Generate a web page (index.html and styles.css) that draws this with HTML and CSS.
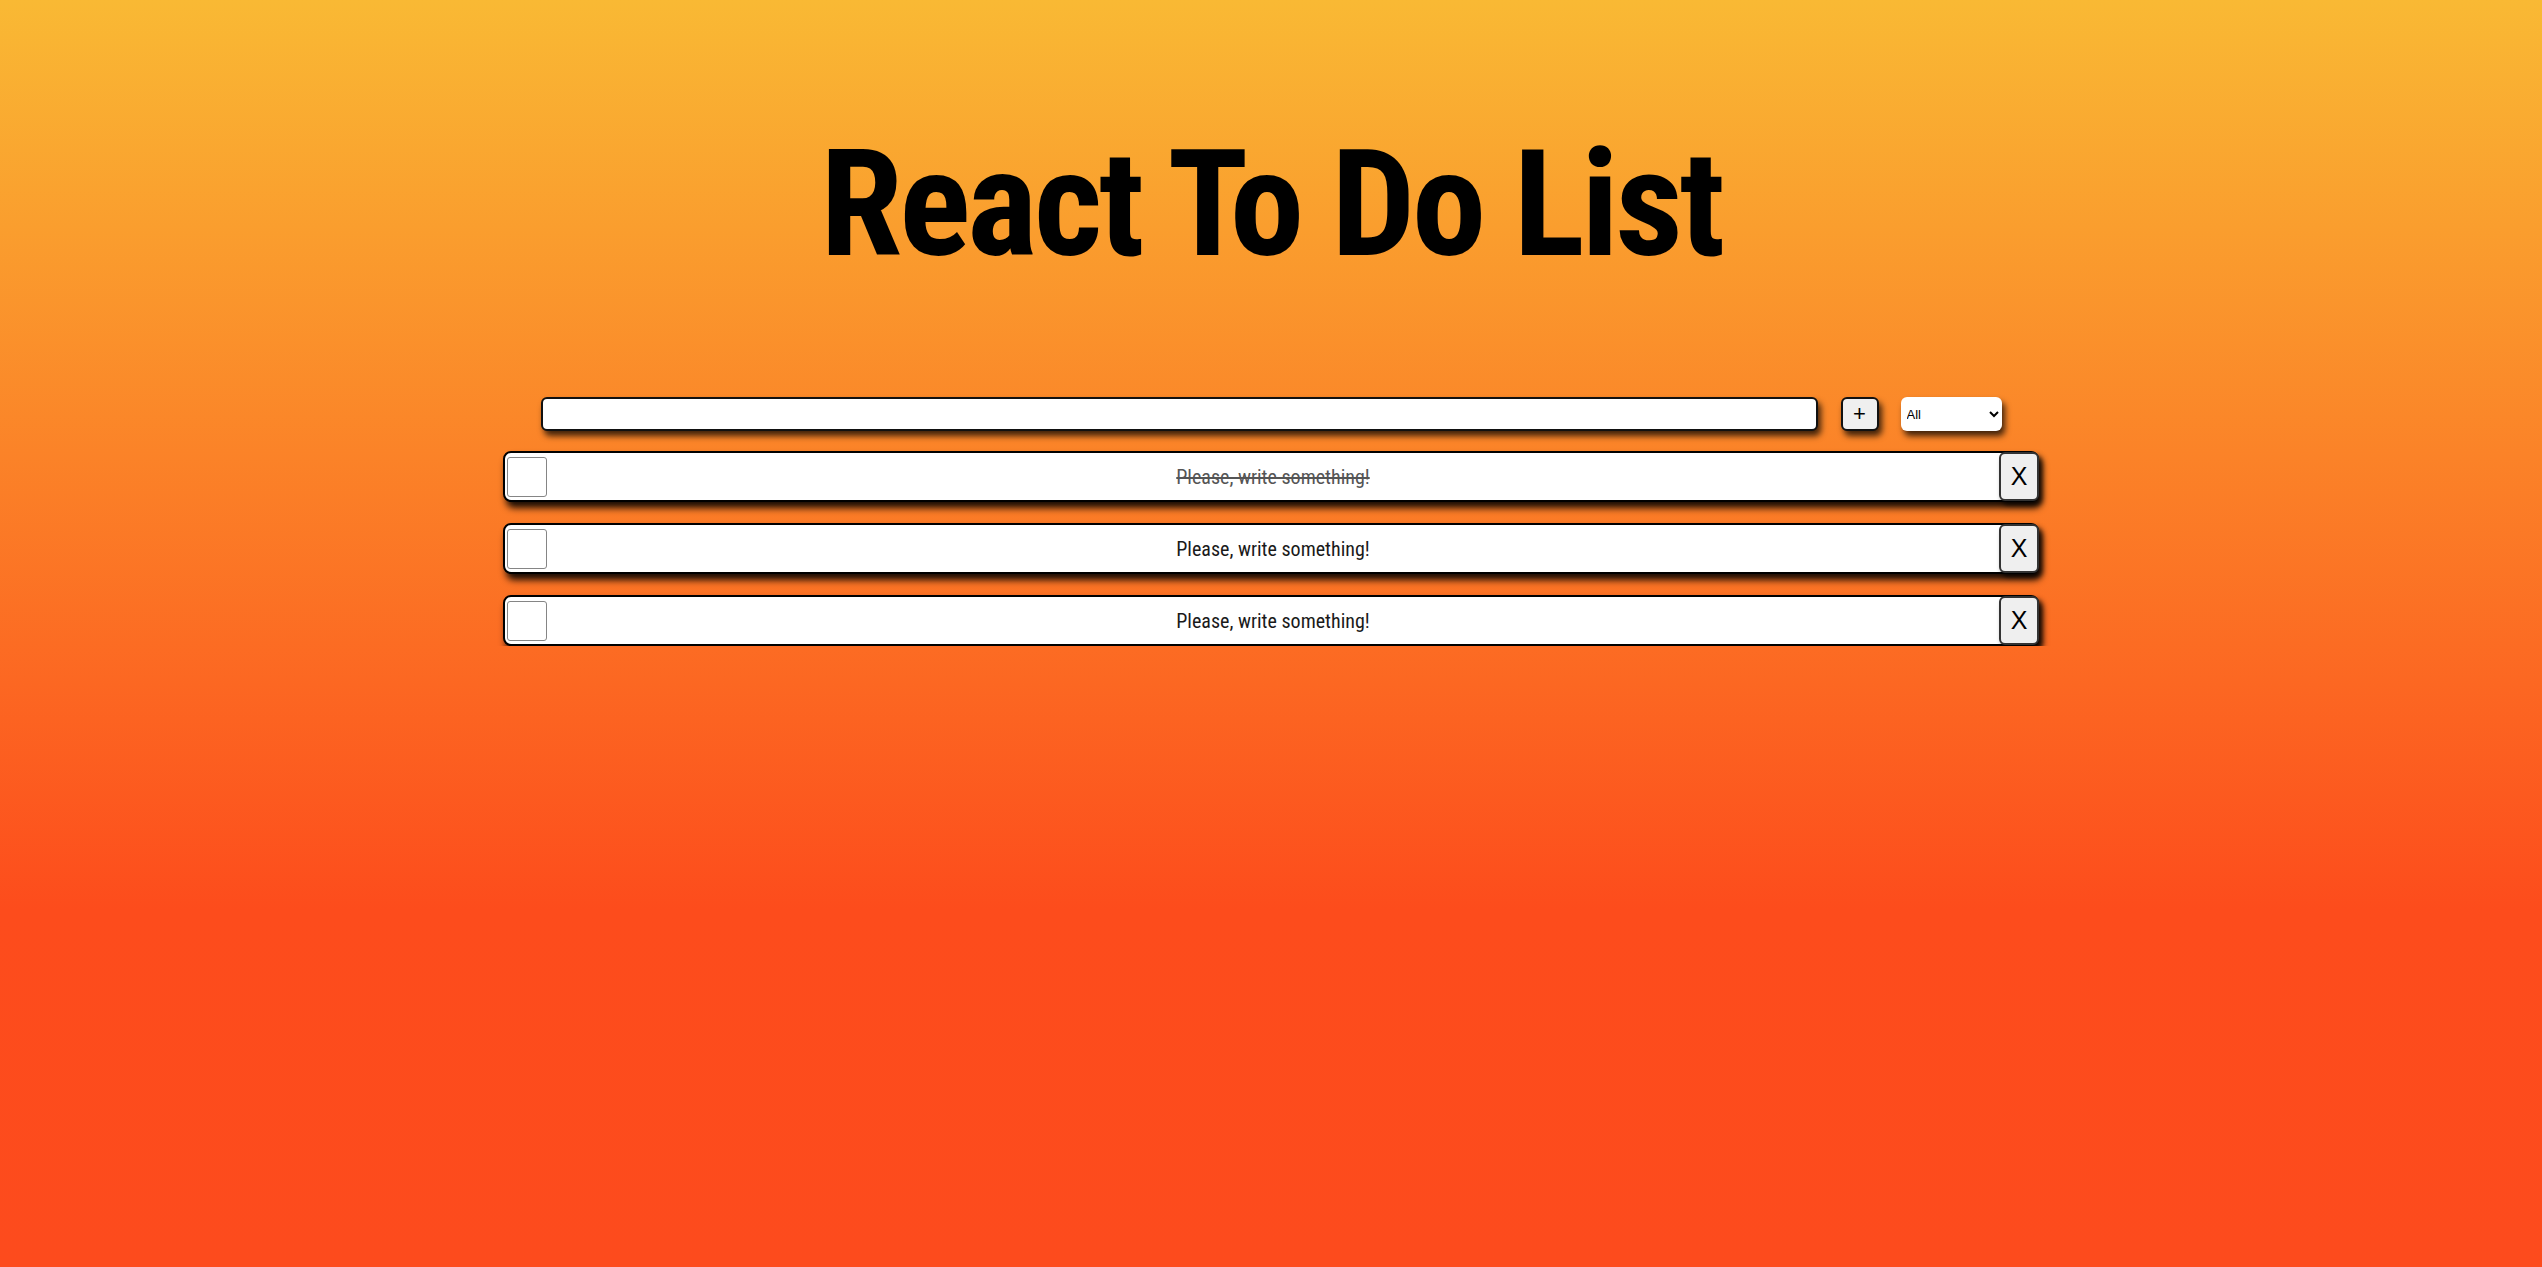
FILE: index.html
```html
<!DOCTYPE html>
<html lang="en">
<head>
<meta charset="utf-8">
<title>React To Do List</title>
<link rel="stylesheet" href="styles.css">
</head>
<body>
<div class="app">
  <header class="header">
    <h1 class="title">React To Do List</h1>
  </header>
  <form class="add-form">
    <input class="todo-input" type="text">
    <button class="add-btn" type="button">+</button>
    <select class="filter">
      <option>All</option>
      <option>Completed</option>
      <option>Uncompleted</option>
    </select>
  </form>
  <ul class="todo-list">
    <li class="todo completed">
      <span class="check"></span>
      <span class="todo-text">Please, write something!</span>
      <button class="delete-btn" type="button">X</button>
    </li>
    <li class="todo">
      <span class="check"></span>
      <span class="todo-text">Please, write something!</span>
      <button class="delete-btn" type="button">X</button>
    </li>
    <li class="todo">
      <span class="check"></span>
      <span class="todo-text">Please, write something!</span>
      <button class="delete-btn" type="button">X</button>
    </li>
  </ul>
</div>
</body>
</html>
```

FILE: styles.css
```css
html {
  min-height: 100%;
  background: linear-gradient(to bottom, #f9b934 0px, #fd4c1c 910px, #fd4b1d 100%);
  background-color: #fd4b1d;
}

body {
  margin: 0;
  font-family: "Roboto", "Liberation Sans", sans-serif;
}

.app {
  display: flex;
  flex-direction: column;
  align-items: center;
}

.header {
  height: 375px;
  display: flex;
  justify-content: center;
}

.title {
  margin: 0;
  padding-top: 130px;
  font-size: 149px;
  font-weight: 700;
  font-stretch: 75%;
  letter-spacing: -3.5px;
  line-height: 1;
  color: #000;
}

.add-form {
  display: flex;
  align-items: center;
  margin: 22px 0 20px;
}

.todo-input {
  box-sizing: border-box;
  width: 1277px;
  height: 34px;
  border: 2px solid #111;
  border-radius: 6px;
  background: #fff;
  box-shadow: 3px 5px 6px rgba(0, 0, 0, 0.75);
  outline: none;
}

.add-btn {
  box-sizing: border-box;
  width: 38px;
  height: 34px;
  margin-left: 23px;
  border: 2px solid #111;
  border-radius: 6px;
  background: #efefef;
  font-family: "Liberation Sans", Arial, sans-serif;
  font-size: 22px;
  line-height: 1;
  padding: 0;
  box-shadow: 3px 5px 6px rgba(0, 0, 0, 0.75);
}

.filter {
  box-sizing: border-box;
  width: 101px;
  height: 34px;
  margin-left: 22px;
  border: none;
  border-radius: 6px;
  background: #fff;
  font-family: "Liberation Sans", Arial, sans-serif;
  font-size: 13px;
  padding: 0 2px;
  box-shadow: 3px 5px 6px rgba(0, 0, 0, 0.75);
}

.todo-list {
  list-style: none;
  margin: 0;
  padding: 0;
  display: flex;
  flex-direction: column;
  gap: 21px;
}

.todo {
  box-sizing: border-box;
  width: 1536px;
  height: 51px;
  display: flex;
  align-items: center;
  border: 2px solid #000;
  border-radius: 8px;
  background: #fff;
  box-shadow: 3px 6px 7px rgba(0, 0, 0, 0.9);
}

.check {
  box-sizing: border-box;
  width: 40px;
  height: 40px;
  margin-left: 2px;
  border: 1px solid #858585;
  border-radius: 3px;
  background: #fff;
  flex: none;
}

.todo-text {
  flex: 1;
  text-align: center;
  font-size: 20px;
  font-stretch: 75%;
  color: #1a1a1a;
}

.completed .todo-text {
  text-decoration: line-through;
  color: #555;
}

.delete-btn {
  box-sizing: border-box;
  width: 40px;
  height: 49px;
  margin-right: -2px;
  border: 2px solid #333;
  border-radius: 6px;
  background: #efefef;
  font-family: "Liberation Sans", Arial, sans-serif;
  font-size: 25px;
  padding: 0;
  flex: none;
  box-shadow: 3px 4px 5px rgba(0, 0, 0, 0.7);
}
```
